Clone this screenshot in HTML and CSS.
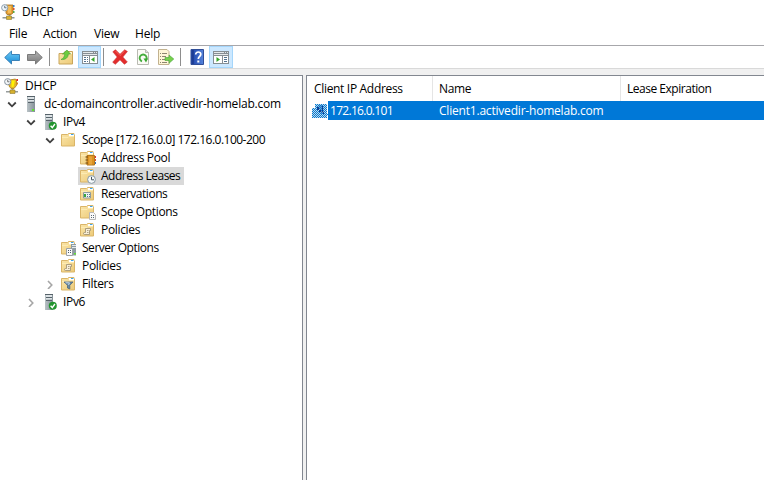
FILE: index.html
```html
<!DOCTYPE html>
<html lang="en">
<head>
<meta charset="utf-8">
<title>DHCP</title>
<link rel="stylesheet" href="styles.css">
</head>
<body>
<svg class="defs" width="0" height="0" aria-hidden="true">
  <defs>
    <linearGradient id="gf" x1="0" y1="0" x2="1" y2="1"><stop offset="0" stop-color="#fbe6aa"/><stop offset="1" stop-color="#ecca78"/></linearGradient>
    <linearGradient id="gs" x1="0" y1="0" x2="1" y2="0"><stop offset="0" stop-color="#b9c2c6"/><stop offset="1" stop-color="#849097"/></linearGradient>
    <linearGradient id="gb" x1="0" y1="0" x2="0" y2="1"><stop offset="0" stop-color="#70cdf8"/><stop offset="1" stop-color="#1488d4"/></linearGradient>
    <linearGradient id="gg" x1="0" y1="0" x2="0" y2="1"><stop offset="0" stop-color="#b5b5b5"/><stop offset="1" stop-color="#777"/></linearGradient>
    <linearGradient id="gh" x1="0" y1="0" x2="1" y2="0"><stop offset="0" stop-color="#1c3d9c"/><stop offset=".25" stop-color="#2850b4"/><stop offset="1" stop-color="#5584dc"/></linearGradient>
    <pattern id="dither" width="2" height="2" patternUnits="userSpaceOnUse"><path fill="#0078d7" d="M0 0h1v1H0zM1 1h1v1H1z"/></pattern>
    <symbol id="folder" viewBox="0 0 16 16">
      <path d="M.5 2.500h6l1-1h5.500v1.500h.5v11H.5z" fill="url(#gf)" stroke="#dab568"/>
      <path d="M8 2h5v2H8z" fill="#fff"/><path d="M10 2h2.500v1H10z" fill="#3fa4e8"/>
      <path d="M1 5.500h6l1-1h5" fill="none" stroke="#fff0bd" stroke-width=".7"/>
    </symbol>
    <symbol id="server" viewBox="0 0 16 16">
      <path d="M4 0h8v16H4z" fill="url(#gs)"/><path d="M4 0h8v1H4zM5 3h6v1H5zM5 6h6v1H5z" fill="#56626a"/>
      <path d="M5 1h6v2H5zM5 4h6v1.500H5z" fill="#dde3e6"/><path d="M9 13h2v2H9z" fill="#5de52b"/>
    </symbol>
    <symbol id="server-ok" viewBox="0 0 16 16">
      <use href="#server" width="16" height="16"/>
      <circle cx="11.800" cy="11.800" r="4" fill="#21942e"/><path d="m9.600 11.800 1.700 1.800 2.600-3.600" fill="none" stroke="#fff" stroke-width="1.400"/>
    </symbol>
    <symbol id="dhcp" viewBox="0 0 16 16">
      <path d="M5.500 2 11.500 1l1 1v5.500L10 10.500H7L5 8z" fill="#e3b52a" stroke="#a87e16" stroke-width=".8"/>
      <path d="M7.500 2.500H11L9.500 9H7.500z" fill="#fff200"/><path d="M12.500 1H14v2h-1.500z" fill="#e6201c"/><path d="M12.500 4.500H14v2h-1.500z" fill="#d88219"/>
      <path d="M7.500 11h2v2h-2zM2 13h12v1.500H2z" fill="#969c9c"/><path d="M6 12h5v3.500H6z" fill="#d7b12d" stroke="#8e7b36" stroke-width=".6"/>
      <circle cx="3.700" cy="3.700" r="3.100" fill="#f3f6f8" stroke="#8995a0"/><path d="M3.700 1.800v2h1.800" fill="none" stroke="#555" stroke-width=".8"/>
    </symbol>
    <symbol id="dhcp-app" viewBox="0 0 16 16">
      <path d="M5 1h7v8l-2 1.500H6L5 9z" fill="#e5a037" stroke="#a3701c" stroke-width=".8"/>
      <path d="M7 2h3v7H7z" fill="#f4bd59"/><path d="M12 1h1.500v2H12z" fill="#347fce"/><path d="M12 4h1.500v2H12z" fill="#d9512c"/><path d="M12 7h1.500v2H12z" fill="#56a746"/>
      <path d="M7.500 11h2v2h-2zM1.500 13h12v1.500h-12z" fill="#8e9898"/><path d="M5.500 12h5v3.500h-5z" fill="#d9b332" stroke="#8e7b36" stroke-width=".6"/>
      <circle cx="3.700" cy="3.700" r="3.100" fill="#edf5fb" stroke="#8fa0ae"/><path d="M3.700 1.800v2h1.800" fill="none" stroke="#456" stroke-width=".8"/>
    </symbol>
    <symbol id="pool" viewBox="0 0 16 16"><use href="#folder" width="16" height="16"/>
      <path d="M7 5.500h7.500v9.500H7z" fill="#dc911f" stroke="#b47720"/><path d="M9 6.500h3v8H9z" fill="#e7a43b"/><path d="M5.500 6.500H8v1H5.500zM5.500 9.500H8v1H5.500zM5.500 12.500H8v1H5.500z" fill="#754c11"/><path d="M15 6h1v2h-1z" fill="#d33"/><path d="M15 9h1v2h-1z" fill="#d9512c"/><path d="M15 12h1v2h-1z" fill="#356fb9"/></symbol>
    <symbol id="leases" viewBox="0 0 16 16"><use href="#folder" width="16" height="16"/>
      <circle cx="11.500" cy="11.500" r="3.900" fill="#f6fafc" stroke="#8797a1"/><path d="M11.500 8.800v3h2.500" fill="none" stroke="#43515d"/></symbol>
    <symbol id="reserv" viewBox="0 0 16 16"><use href="#folder" width="16" height="16"/>
      <path d="M3.500 6.500h7v5.500h-7z" fill="#eef3ef" stroke="#8d9aa0"/><path d="M7 8h1v1H7zM9 8h1v1H9zM7 10h1v1H7zM9 10h1v1H9z" fill="#567596"/><path d="M4 8h2v3H4z" fill="#37a53e"/></symbol>
    <symbol id="opts" viewBox="0 0 16 16"><use href="#folder" width="16" height="16"/>
      <path d="M9.500 8.500h4l2 2v5h-6z" fill="#fafafa" stroke="#b8b8b8"/><path d="M11 11h1v1h-1zM13 11h1v1h-1zM11 13h1v1h-1zM13 13h1v1h-1z" fill="#5c6a76"/></symbol>
    <symbol id="policy" viewBox="0 0 16 16"><use href="#folder" width="16" height="16"/>
      <path d="M5.500 6.500h5v2h-1v4H4.500a1 1 0 0 1 0-2h1z" fill="#f7eed8" stroke="#9b8d70" stroke-width=".8"/><path d="M7 8.500h1.500M7 10.500h1.500" stroke="#9b8d70" stroke-width=".8"/></symbol>
    <symbol id="srvopts" viewBox="0 0 16 16"><use href="#folder" width="16" height="16"/>
      <path d="M10 4h5v11.500h-5z" fill="#8f9ca3"/><path d="M11 5h4v1h-4zM11 7h4v1h-4z" fill="#e5eaec"/><path d="M13 13h2v1.500h-2z" fill="#62df35"/>
      <path d="M5.500 8.500h6v7h-6z" fill="#fafafa" stroke="#9ca2a6"/><path d="M7 10h1v1H7zM9 10h1v1H9zM7 12h1v1H7zM9 12h1v1H9z" fill="#4d5c69"/></symbol>
    <symbol id="filter" viewBox="0 0 16 16"><use href="#folder" width="16" height="16"/>
      <path d="M3 6h9L8.800 9.300V13l-2.300-1V9.300z" fill="#6988a3" stroke="#4e687f" stroke-width=".8"/><path d="M4.500 6.800h4L7.500 9" fill="none" stroke="#c9dbe9"/></symbol>
    <symbol id="down" viewBox="0 0 10 10"><path d="M1.200 3.500 5 7.300 8.800 3.500" fill="none" stroke="#404040" stroke-width="1.800"/></symbol>
    <symbol id="right" viewBox="0 0 10 10"><path d="M3 2 6.800 6 3 10" fill="none" stroke="#a6a6a6" stroke-width="1.600"/></symbol>
  </defs>
</svg>

<header class="title"><svg class="i"><use href="#dhcp-app"/></svg><span>DHCP</span></header>
<nav class="menu"><span>File</span><span>Action</span><span>View</span><span>Help</span></nav>

<div class="toolbar">
  <button class="tb"><svg viewBox="0 0 16 16"><path d="M.7 8.500 7.500 2V5.500h8v6h-8V15z" fill="url(#gb)" stroke="#3b82b8"/></svg></button>
  <button class="tb fwd"><svg viewBox="0 0 16 16"><path d="M15.300 8.500 8.500 2V5.500h-8v6h8V15z" fill="url(#gg)" stroke="#7a7a7a"/></svg></button>
  <i class="sep"></i>
  <button class="tb up"><svg viewBox="0 0 16 16"><path d="M1 4.500h5l1-2h7.500v12.500H1z" fill="url(#gf)" stroke="#c9a55a"/><path d="M10 3h4v2h-4z" fill="#fff5d0"/><path d="M3 10.500C5.500 9.500 6.500 7.500 6.800 5H4.500L9 1l3.500 4h-2.200c0 3.500-2.800 6-7.300 5.500z" fill="#6ccc3e" stroke="#45a036" stroke-width=".6"/></svg></button>
  <button class="tb on first"><svg viewBox="0 0 16 16"><path d="M0 2h16v13H0z" fill="#868e94"/><path d="M1 3h10v1H1zM12 3h1v1h-1zM14 3h1v1h-1zM1 5h14v1H1z" fill="#e4e8ea"/><path d="M1 7h6v7H1zM8 7h7v7H8z" fill="#fff"/><path d="M2 8h2v1H2zM2 10h2v1H2zM2 12h2v1H2zM5 8h1v1H5zM5 10h1v1H5zM5 12h1v1H5z" fill="#53728e"/><path d="M12.500 8v5L9 10.500z" fill="#35a52a"/></svg></button>
  <i class="sep near"></i>
  <button class="tb"><svg viewBox="0 0 16 16"><path d="M3.500.7 8 5.300 12.700.8l2.700 1.700L10.800 8l4.500 5-2.900 2.300L8 10.800l-4.700 4.500-2.600-2.100L5.200 8 .8 2.800z" fill="#e32c2c" stroke="#c83030" stroke-width=".6"/><path d="M3.500 2 8 6.500 12.600 2" fill="none" stroke="#f5665f"/></svg></button>
  <button class="tb"><svg viewBox="0 0 16 16"><path d="M2.500.5h8l3 3v12h-11z" fill="#fbfbf6" stroke="#b9bab2"/><path d="M10.500.5v3h3" fill="#ddd" stroke="#b9bab2"/><path d="M7 12.300A3.500 3.500 0 1 1 11.300 10.500" fill="none" stroke="#45ad3d" stroke-width="1.900"/><path d="M8.500 9.500h4.500l-2 4z" fill="#35a52d"/></svg></button>
  <button class="tb"><svg viewBox="0 0 16 16"><path d="M.5.5h8.500l2 2v13H.5z" fill="#fff6d8" stroke="#c2b28f"/><path d="M2 4h1v1H2zM2 7h1v1H2zM2 10h1v1H2zM2 13h1v1H2zM4 4h5v1H4zM4 7h4v1H4zM4 10h3v1H4zM4 13h5v1H4z" fill="#8d8570"/><path d="M7 8.500h4V6l4.800 4-4.800 4.300v-2.800H7z" fill="#77d04c" stroke="#46a53a" stroke-width=".6"/></svg></button>
  <i class="sep"></i>
  <button class="tb help"><svg viewBox="0 0 16 16"><path d="M2 .5h12.500v15H2z" fill="url(#gh)" stroke="#304e98"/><path d="M4 1v14" stroke="#173382"/><path d="M6.700 5.600c0-3.600 5.300-3.300 5.100-.2C11.700 7.300 9.300 7.400 9.300 10" fill="none" stroke="#fff" stroke-width="1.700"/><path d="M8.300 11.500h2v2h-2z" fill="#fff"/></svg></button>
  <button class="tb on last"><svg viewBox="0 0 16 16"><path d="M0 2h16v13H0z" fill="#868e94"/><path d="M1 3h10v1H1zM12 3h1v1h-1zM14 3h1v1h-1zM1 5h14v1H1z" fill="#e4e8ea"/><path d="M1 7h8v7H1zM10 7h5v7h-5z" fill="#fff"/><path d="M11 8h3v1h-3zM11 10h3v1h-3zM11 12h3v1h-3z" fill="#53728e"/><path d="M3.500 8v5L7 10.500z" fill="#35a52a"/></svg></button>
</div>

<main class="panes">
  <section class="tree">
    <div class="row l0"><svg class="i"><use href="#dhcp"/></svg><span class="t-root">DHCP</span></div>
    <div class="row l1"><svg class="c"><use href="#down"/></svg><svg class="i"><use href="#server"/></svg><span class="t-dc">dc-domaincontroller.activedir-homelab.com</span></div>
    <div class="row l2"><svg class="c"><use href="#down"/></svg><svg class="i"><use href="#server-ok"/></svg><span>IPv4</span></div>
    <div class="row l3"><svg class="c"><use href="#down"/></svg><svg class="i"><use href="#folder"/></svg><span class="t-scope">Scope [172.16.0.0] 172.16.0.100-200</span></div>
    <div class="row l4"><svg class="i"><use href="#pool"/></svg><span>Address Pool</span></div>
    <div class="row l4 sel"><svg class="i"><use href="#leases"/></svg><span>Address Leases</span></div>
    <div class="row l4"><svg class="i"><use href="#reserv"/></svg><span class="t-reserv">Reservations</span></div>
    <div class="row l4"><svg class="i"><use href="#opts"/></svg><span>Scope Options</span></div>
    <div class="row l4"><svg class="i"><use href="#policy"/></svg><span>Policies</span></div>
    <div class="row l3 leaf"><svg class="i"><use href="#srvopts"/></svg><span class="t-srv">Server Options</span></div>
    <div class="row l3 leaf"><svg class="i"><use href="#policy"/></svg><span>Policies</span></div>
    <div class="row l3"><svg class="c"><use href="#right"/></svg><svg class="i"><use href="#filter"/></svg><span>Filters</span></div>
    <div class="row l2"><svg class="c"><use href="#right"/></svg><svg class="i"><use href="#server-ok"/></svg><span>IPv6</span></div>
  </section>
  <section class="list">
    <div class="cols head"><span>Client IP Address</span><span>Name</span><span>Lease Expiration</span></div>
    <div class="entry">
      <svg class="i" viewBox="0 0 16 16"><path d="M3 1h12v10h1v1h-1v3H0V5h3z" fill="#c3dbe6"/><path d="M6 2h5l1 9H9z" fill="#6d9cc8"/><path d="M3 1h12v10h1v1h-1v3H0V5h3z" fill="url(#dither)"/><path d="M5 4h2v3H5zM7 7h2v2H7zM10 3h1v6h-1zM11 9h1v2h-1z" fill="#0a3f95"/></svg>
      <div class="cols picked"><span class="t-ip">172.16.0.101</span><span>Client1.activedir-homelab.com</span></div>
    </div>
  </section>
</main>
</body>
</html>
```
FILE: styles.css
```css
* { box-sizing: border-box; }
body {
  margin: 0;
  width: 764px;
  height: 480px;
  overflow: hidden;
  display: flex;
  flex-direction: column;
  background: #fff;
  color: #000;
  font: 12px/18px "Open Sans", "Noto Sans", sans-serif;
  letter-spacing: -0.2px;
  white-space: nowrap;
}
.defs { position: absolute; }
svg { display: block; flex: none; }
.i { width: 16px; height: 16px; }
.c { width: 10px; height: 10px; margin-right: 5px; }

.title { height: 23px; padding: 0 0 0 1px; display: flex; align-items: center; gap: 5px; }
.menu { height: 22px; padding-left: 9px; display: flex; align-items: center; }
.menu span:nth-child(1) { width: 34px; }
.menu span:nth-child(2) { width: 51px; }
.menu span:nth-child(3) { width: 41px; }

.toolbar {
  height: 24px;
  border-top: 1px solid #a7a7ab;
  border-bottom: 1px solid #d9d9d9;
  display: flex;
  align-items: center;
}
.tb { width: 23px; height: 22px; padding: 0; border: 0; background: none; display: grid; place-items: center; flex: none; }
.tb svg { width: 16px; height: 16px; }
.tb.on { background: #cce8ff; border: 1px solid #a5d6fb; }
.fwd svg { margin-left: 1px; }
.up svg { margin-right: 2px; }
.help svg { margin-right: 2px; }
.sep { width: 1px; height: 18px; background: #8d8d8d; margin: 0 5px 0 3px; }
.sep.near { margin: 0 4px 0 2px; }
.tb.last { width: 24px; }

.panes { flex: 1; display: flex; gap: 3px; padding-top: 6px; background: #f0f0f0; }
.tree { width: 303px; background: #fff; border: solid #828790; border-width: 1px 1px 0 0; padding-top: 1px; letter-spacing: -0.33px; }
.row { height: 18px; display: flex; align-items: center; }
.row .i { margin-right: 5px; }
.l0 { padding-left: 4px; }
.l1 { padding-left: 7px; }
.row.l1 .c { margin-right: 6px; }
.l2 { padding-left: 26px; }
.row.l2 .i { margin-right: 6px; }
.l3 { padding-left: 45px; }
.row.l3 .c { margin-right: 6px; }
.leaf { padding-left: 61px; }
.l4 { padding-left: 80px; }
.sel { background: linear-gradient(#d9d9d9, #d9d9d9) 78px 0 / 106px 18px no-repeat; letter-spacing: -0.5px; }
.t-root { letter-spacing: -0.2px; }
.t-dc { letter-spacing: -0.21px; }
.t-scope { letter-spacing: -0.51px; }
.t-reserv { letter-spacing: -0.45px; }
.t-srv { letter-spacing: -0.47px; }
.t-ip { letter-spacing: -0.7px; }

.list { flex: 1; background: #fff; border: solid #828790; border-width: 1px 0 0 1px; }
.cols { display: grid; }
.head { grid-template-columns: 126px 188px 1fr; height: 25px; line-height: 26px; letter-spacing: -0.32px; }
.head span { padding-left: 7px; border-right: 1px solid #e5e5e5; }
.head span:not(:first-child) { padding-left: 6px; }
.head span:last-child { border: 0; letter-spacing: -0.48px; }
.entry { display: flex; height: 19px; padding-left: 5px; align-items: center; }
.picked { flex: 1; grid-template-columns: 109px 1fr; height: 19px; line-height: 19px; padding-left: 2px; background: #0078d7; color: #fff; }
```
